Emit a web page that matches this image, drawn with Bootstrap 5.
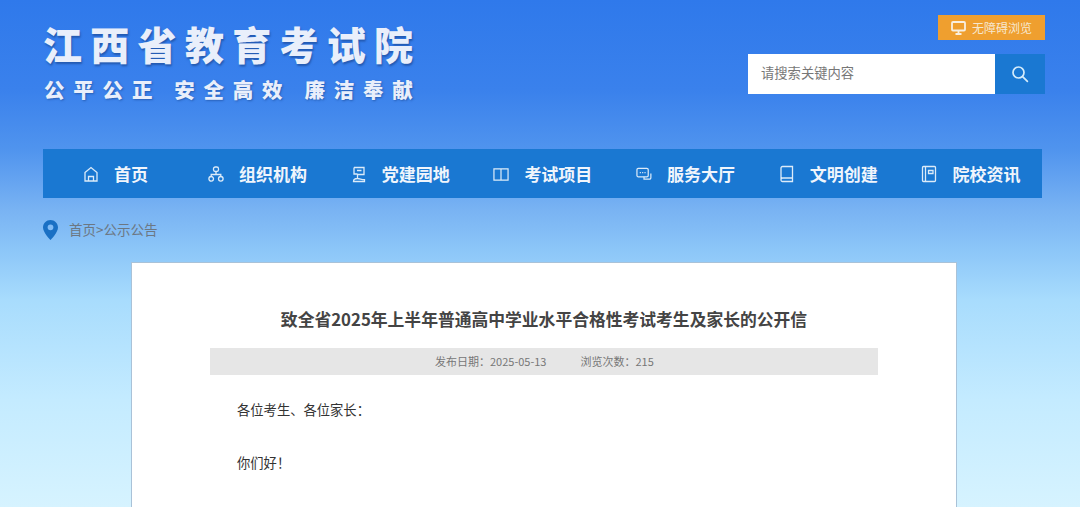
<!DOCTYPE html>
<html lang="zh-CN">
<head>
<meta charset="utf-8">
<title>江西省教育考试院</title>
<link rel="stylesheet" href="https://cdn.jsdelivr.net/npm/bootstrap@5.3.0/dist/css/bootstrap.min.css">
<style>
html,body{height:507px;overflow:hidden}
body{font-family:"Noto Sans CJK SC","Noto Sans",sans-serif;color:#333;background:linear-gradient(180deg,#2f79eb 0,#3a81ec 90px,#5094ee 150px,#79b3f3 210px,#8cc6f8 250px,#a8dcfd 300px,#c4ebff 400px,#d6f3ff 507px) no-repeat}
.page-shell{padding:0 35px 0 43px}
.top-head{height:149px}
.brand-main{font-size:39px;font-weight:900;letter-spacing:8.3px;line-height:46px;color:#e9effb;text-shadow:1px 2px 2px rgba(20,60,130,.55);margin:20px 0 0 0;white-space:nowrap}
.brand-sub{font-size:20.5px;font-weight:900;letter-spacing:8.8px;line-height:24px;color:#e9effb;text-shadow:1px 1px 2px rgba(20,60,130,.5);margin:11px 0 0 1px;white-space:nowrap}
.brand-sub span{margin-right:13px}
.tools{padding-top:15px}
.access-btn{width:107px;height:25px;background:#ef9f2f;color:#f6e7cf;font-size:12px;border-radius:0;border:0;padding:0;gap:6px}
.search-box{margin-top:14px;height:40px}
.search-input{width:247px;height:40px;border:0;border-radius:0;font-size:13.3px;padding:0 13px 3px;color:#555}
.search-input::placeholder{color:#777;opacity:1}
.search-btn{width:50px;height:40px;background:#1a78d2;border:0;border-radius:0;padding:0}
.main-nav{height:49px;width:999px;background:#1a78d2;padding:0 0 0 40px!important}
.main-nav .nav-link{flex:none;width:142.7px;padding:0;color:#f0f5fc;font-size:17px;font-weight:700;line-height:24px;gap:15px;white-space:nowrap}
.main-nav .nav-link.first-link{width:125px}
.main-nav .nav-link:last-child{width:auto}
.main-nav svg{flex:none;width:16px;height:18px}
.crumb{height:64px;font-size:13.5px;color:#6c7783;gap:11px;padding-bottom:1px}
.article-card{width:826px;height:245px;margin-left:88px;background:#fff;border:1px solid #a9c2d8;border-bottom:0;border-radius:0;padding:0 78px}
.article-title{font-size:16.8px;font-weight:700;color:#444;text-align:center;line-height:24px;margin:44px 0 17px}
.meta-bar{height:27px;background:#e6e6e6;font-size:11px;color:#777;padding-left:225px;gap:34px}
.letter{padding:0 27px;font-size:13.3px;color:#333;line-height:20px}
.letter p{margin:25px 0 33px}
</style>
</head>
<body>
<div class="page-shell">
  <header class="top-head d-flex justify-content-between align-items-start">
    <div>
      <div class="brand-main">江西省教育考试院</div>
      <div class="brand-sub"><span>公平公正</span><span>安全高效</span><span>廉洁奉献</span></div>
    </div>
    <div class="tools d-flex flex-column align-items-end">
      <button type="button" class="btn access-btn d-flex align-items-center justify-content-center">
        <svg width="15" height="14" viewBox="0 0 15 14" fill="none" stroke="#f8efe0" stroke-width="1.8"><rect x="1" y="1" width="13" height="8.500" rx="1"/><path d="M7.500 10v3M4.500 13h6"/></svg>
        <span>无障碍浏览</span>
      </button>
      <div class="search-box d-flex">
        <input class="form-control search-input" type="text" placeholder="请搜索关键内容">
        <button type="button" class="btn search-btn d-flex align-items-center justify-content-center" aria-label="搜索">
          <svg width="18" height="18" viewBox="0 0 18 18" fill="none" stroke="#d5ecfb" stroke-width="1.7" stroke-linecap="round"><circle cx="7.500" cy="7.500" r="5.500"/><path d="M11.600 11.600 16.400 16.400"/></svg>
        </button>
      </div>
    </div>
  </header>

  <nav class="nav main-nav align-items-center flex-nowrap">
    <a class="nav-link first-link d-flex align-items-center" href="#">
      <svg viewBox="0 0 16 18" fill="none" stroke="#dcebf9" stroke-width="1.300"><path d="M2 7.500 8 2.500l6 5V16H2z"/><path d="M5.500 16v-4.500h5V16"/></svg>
      <span>首页</span></a>
    <a class="nav-link d-flex align-items-center" href="#">
      <svg viewBox="0 0 16 18" fill="none" stroke="#dcebf9" stroke-width="1.300"><rect x="5.500" y="2" width="5" height="4.500" rx="1.800"/><circle cx="3.200" cy="13.800" r="2.300"/><circle cx="12.800" cy="13.800" r="2.300"/><path d="M8 6.500v3M3.200 11.500V9.500h9.600v2"/></svg>
      <span>组织机构</span></a>
    <a class="nav-link d-flex align-items-center" href="#">
      <svg viewBox="0 0 16 18" fill="none" stroke="#dcebf9" stroke-width="1.300"><path d="M3 2.500h10v7H6.500v4M6 5.500h4.500M3 2.500v6.500h3.500M2.500 16.500c0-2 1.500-3 4-3s3.500 1 7 1.200v1.800z"/></svg>
      <span>党建园地</span></a>
    <a class="nav-link d-flex align-items-center" href="#">
      <svg viewBox="0 0 17 18" fill="none" stroke="#dcebf9" stroke-width="1.300"><path d="M1 3.500h7.500v12H1zM8.500 3.500H16v12H8.500z"/></svg>
      <span>考试项目</span></a>
    <a class="nav-link d-flex align-items-center" href="#">
      <svg viewBox="0 0 17 18" fill="none" stroke="#dcebf9" stroke-width="1.300"><rect x="1" y="3" width="12" height="9" rx="1.500"/><path d="M4 7.500h1.200M6.500 7.500h1.200M9 7.500h1.200M15.800 8.500v4.500a1.500 1.500 0 0 1-1.500 1.500H8.500V12"/></svg>
      <span>服务大厅</span></a>
    <a class="nav-link d-flex align-items-center" href="#">
      <svg viewBox="0 0 15 18" fill="none" stroke="#dcebf9" stroke-width="1.300"><path d="M3 1.500h10v15H3a1.500 1.500 0 0 1-1.500-1.500V3A1.500 1.500 0 0 1 3 1.500zM1.500 14.500a1.500 1.500 0 0 1 1.500-1.500h10"/></svg>
      <span>文明创建</span></a>
    <a class="nav-link d-flex align-items-center" href="#">
      <svg viewBox="0 0 15 18" fill="none" stroke="#dcebf9" stroke-width="1.300"><rect x="1" y="1.500" width="13" height="15" rx="1"/><path d="M4 1.500v15M7 5.500h4.500v3H7z"/></svg>
      <span>院校资讯</span></a>
  </nav>

  <div class="crumb d-flex align-items-center">
    <svg width="15" height="20" viewBox="0 0 15 20"><path fill-rule="evenodd" fill="#1a70c4" d="M7.500 0C3.400 0 0 3.300 0 7.400 0 12.500 7.500 20 7.500 20S15 12.500 15 7.400C15 3.300 11.600 0 7.500 0zm0 10.200a2.900 2.900 0 1 1 0-5.800 2.900 2.900 0 0 1 0 5.800z"/></svg>
    <span>首页&gt;公示公告</span>
  </div>

  <main class="card article-card">
    <h1 class="article-title">致全省2025年上半年普通高中学业水平合格性考试考生及家长的公开信</h1>
    <div class="meta-bar d-flex align-items-center">
      <span>发布日期：2025-05-13</span>
      <span>浏览次数：215</span>
    </div>
    <div class="letter">
      <p>各位考生、各位家长：</p>
      <p>你们好！</p>
    </div>
  </main>
</div>
</body>
</html>
